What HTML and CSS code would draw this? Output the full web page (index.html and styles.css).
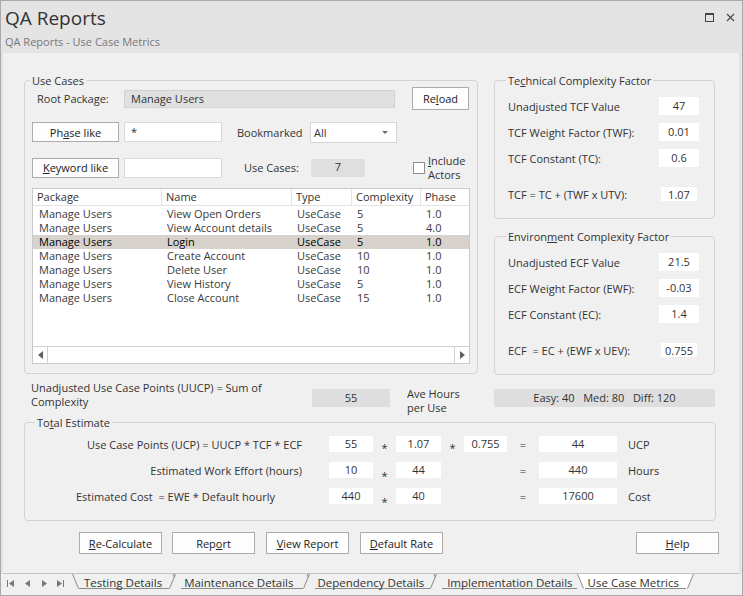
FILE: index.html
```html
<!DOCTYPE html>
<html>
<head>
<meta charset="utf-8">
<link rel="stylesheet" href="styles.css">
</head>
<body>
<div class="window">
  <header class="titlebar">
    <div class="titles">
      <h1 class="title">QA Reports</h1>
      <div class="subtitle">QA Reports - Use Case Metrics</div>
    </div>
    <div class="winbtns">
      <svg class="wicon" width="9" height="9" viewBox="0 0 9 9"><rect x="0.5" y="0.5" width="8" height="8" fill="none" stroke="#444" stroke-width="1"/><line x1="0" y1="1.5" x2="9" y2="1.5" stroke="#444"/></svg>
      <svg class="wicon" width="9" height="9" viewBox="0 0 9 9"><path d="M1 1 L8 8 M8 1 L1 8" stroke="#444" stroke-width="1.1" fill="none"/></svg>
    </div>
  </header>

  <main class="content">
    <div class="top">
      <fieldset class="group usecases">
        <legend>Use Cases</legend>
        <div class="uc-row r1">
          <span class="lbl root-lbl">Root Package:</span>
          <div class="rootbox">Manage Users</div>
          <button class="btn reload">Re<u>l</u>oad</button>
        </div>
        <div class="uc-row r2">
          <button class="btn wide">Ph<u>a</u>se like</button>
          <div class="input">*</div>
          <span class="lbl bm-lbl">Bookmarked</span>
          <div class="select"><span>All</span><svg width="6" height="3" viewBox="0 0 6 3"><path d="M0 0 L6 0 L3 3 Z" fill="#707070"/></svg></div>
        </div>
        <div class="uc-row r3">
          <button class="btn wide"><u>K</u>eyword like</button>
          <div class="input"></div>
          <span class="lbl uccount-lbl">Use Cases:</span>
          <div class="countbox">7</div>
          <span class="check"></span>
          <span class="check-lbl"><u>I</u>nclude<br>Actors</span>
        </div>
        <div class="grid">
          <div class="ghead">
            <div class="c c1">Package</div>
            <div class="c">Name</div>
            <div class="c">Type</div>
            <div class="c">Complexity</div>
            <div class="c last">Phase</div>
          </div>
          <div class="gbody">
            <div class="grow"><div class="c c1">Manage Users</div><div class="c">View Open Orders</div><div class="c">UseCase</div><div class="c">5</div><div class="c">1.0</div></div>
            <div class="grow"><div class="c c1">Manage Users</div><div class="c">View Account details</div><div class="c">UseCase</div><div class="c">5</div><div class="c">4.0</div></div>
            <div class="grow sel"><div class="c c1">Manage Users</div><div class="c">Login</div><div class="c">UseCase</div><div class="c">5</div><div class="c">1.0</div></div>
            <div class="grow"><div class="c c1">Manage Users</div><div class="c">Create Account</div><div class="c">UseCase</div><div class="c">10</div><div class="c">1.0</div></div>
            <div class="grow"><div class="c c1">Manage Users</div><div class="c">Delete User</div><div class="c">UseCase</div><div class="c">10</div><div class="c">1.0</div></div>
            <div class="grow"><div class="c c1">Manage Users</div><div class="c">View History</div><div class="c">UseCase</div><div class="c">5</div><div class="c">1.0</div></div>
            <div class="grow"><div class="c c1">Manage Users</div><div class="c">Close Account</div><div class="c">UseCase</div><div class="c">15</div><div class="c">1.0</div></div>
          </div>
          <div class="hscroll">
            <div class="sarrow left"><svg width="5" height="8" viewBox="0 0 5 8"><path d="M5 0 L0 4 L5 8 Z" fill="#606060"/></svg></div>
            <div class="strack"></div>
            <div class="sarrow right"><svg width="5" height="8" viewBox="0 0 5 8"><path d="M0 0 L5 4 L0 8 Z" fill="#606060"/></svg></div>
          </div>
        </div>
      </fieldset>

      <div class="factors">
        <fieldset class="group factor">
          <legend>Te<u>c</u>hnical Complexity Factor</legend>
          <div class="frow first"><span class="flbl">Unadjusted TCF Value</span><span class="fval">47</span></div>
          <div class="frow"><span class="flbl">TCF Weight Factor (TWF):</span><span class="fval">0.01</span></div>
          <div class="frow"><span class="flbl">TCF Constant (TC):</span><span class="fval">0.6</span></div>
          <div class="frow result"><span class="flbl">TCF = TC + (TWF x UTV):</span><span class="fval">1.07</span></div>
        </fieldset>
        <fieldset class="group factor">
          <legend>Environ<u>m</u>ent Complexity Factor</legend>
          <div class="frow first"><span class="flbl">Unadjusted ECF Value</span><span class="fval">21.5</span></div>
          <div class="frow"><span class="flbl">ECF Weight Factor (EWF):</span><span class="fval">-0.03</span></div>
          <div class="frow"><span class="flbl">ECF Constant (EC):</span><span class="fval">1.4</span></div>
          <div class="frow result"><span class="flbl">ECF &nbsp;= EC + (EWF x UEV):</span><span class="fval">0.755</span></div>
        </fieldset>
      </div>
    </div>

    <div class="uucp">
      <span class="uucp-lbl">Unadjusted Use Case Points (UUCP) = Sum of Complexity</span>
      <div class="graybox uucp-val">55</div>
      <span class="ave-lbl">Ave Hours per Use</span>
      <div class="graybox ave-val">Easy: 40 &nbsp; Med: 80 &nbsp; Diff: 120</div>
    </div>

    <fieldset class="group total">
      <legend>To<u>t</u>al Estimate</legend>
      <div class="trow first">
        <span class="tlbl">Use Case Points (UCP) = UUCP * TCF * ECF</span>
        <span class="tbox b1">55</span>
        <span class="op star">*</span>
        <span class="tbox b2">1.07</span>
        <span class="op star">*</span>
        <span class="tbox b3">0.755</span>
        <span class="op eq">=</span>
        <span class="tbox res">44</span>
        <span class="unit">UCP</span>
      </div>
      <div class="trow">
        <span class="tlbl">Estimated Work Effort (hours)</span>
        <span class="tbox b1">10</span>
        <span class="op star low">*</span>
        <span class="tbox b2">44</span>
        <span class="op gap"></span>
        <span class="op eq">=</span>
        <span class="tbox res">440</span>
        <span class="unit">Hours</span>
      </div>
      <div class="trow">
        <span class="tlbl left">Estimated Cost &nbsp;= EWE * Default hourly</span>
        <span class="tbox b1">440</span>
        <span class="op star low">*</span>
        <span class="tbox b2">40</span>
        <span class="op gap"></span>
        <span class="op eq">=</span>
        <span class="tbox res">17600</span>
        <span class="unit">Cost</span>
      </div>
    </fieldset>

    <div class="buttons">
      <button class="btn act"><u>R</u>e-Calculate</button>
      <button class="btn act">Rep<u>o</u>rt</button>
      <button class="btn act"><u>V</u>iew Report</button>
      <button class="btn act"><u>D</u>efault Rate</button>
      <button class="btn act help"><u>H</u>elp</button>
    </div>
  </main>

  <footer class="tabbar">
    <div class="nav">
      <svg width="7" height="7" viewBox="0 0 7 7"><rect x="0" y="0" width="1" height="7" fill="#777"/><path d="M7 0 L2 3.5 L7 7 Z" fill="#777"/></svg>
      <svg width="5" height="7" viewBox="0 0 5 7"><path d="M5 0 L0 3.5 L5 7 Z" fill="#777"/></svg>
      <svg width="5" height="7" viewBox="0 0 5 7"><path d="M0 0 L5 3.5 L0 7 Z" fill="#777"/></svg>
      <svg width="7" height="7" viewBox="0 0 7 7"><path d="M0 0 L5 3.5 L0 7 Z" fill="#777"/><rect x="6" y="0" width="1" height="7" fill="#777"/></svg>
    </div>
    <div class="tabs">
      <svg class="slant" width="7" height="15" viewBox="0 0 7 15"><line x1="0.5" y1="0" x2="6.5" y2="14.5" stroke="#8a8a8a"/></svg>
      <span class="tab t1">Testing Details</span>
      <svg class="slant" width="12" height="15" viewBox="0 0 12 15"><path d="M0.5 14.5 L6.5 0 M4 0 L5.4 3.4" stroke="#8a8a8a" fill="none"/></svg>
      <span class="tab t2">Maintenance Details</span>
      <svg class="slant" width="12" height="15" viewBox="0 0 12 15"><path d="M0.5 14.5 L6.5 0 M4 0 L5.4 3.4" stroke="#8a8a8a" fill="none"/></svg>
      <span class="tab t3">Dependency Details</span>
      <svg class="slant" width="12" height="15" viewBox="0 0 12 15"><path d="M0.5 14.5 L6.5 0 M4 0 L5.4 3.4" stroke="#8a8a8a" fill="none"/></svg>
      <span class="tab t4">Implementation Details</span>
      <svg class="slant" width="8" height="15" viewBox="0 0 8 15"><path d="M0 0 L8 0 L8 15 L6 15 Z" fill="#fff"/><line x1="0.5" y1="0" x2="6.5" y2="14.5" stroke="#8a8a8a"/></svg>
      <span class="tab active">Use Case Metrics</span>
      <svg class="slant" width="8" height="15" viewBox="0 0 8 15"><path d="M0 0 L8 0 L1.5 15 L0 15 Z" fill="#fff"/><line x1="1.5" y1="14.5" x2="7.5" y2="0" stroke="#8a8a8a"/></svg>
    </div>
  </footer>
</div>
</body>
</html>
```

FILE: styles.css
```css
* { box-sizing: border-box; }

body {
  margin: 0;
  width: 743px;
  height: 596px;
  overflow: hidden;
  font-family: "Open Sans", "Noto Sans", sans-serif;
  font-size: 11px;
  color: #333;
  background: #e4e4e4;
}

.window {
  width: 743px;
  height: 596px;
  border: 1px solid #a9a9a9;
  background: #e4e4e4;
  display: flex;
  flex-direction: column;
}

/* ---------- title bar ---------- */
.titlebar {
  height: 52px;
  flex: none;
  display: flex;
  justify-content: space-between;
  align-items: flex-start;
  padding: 5px 7px 0 4px;
}
.title {
  margin: 0;
  font-size: 19px;
  font-weight: 400;
  line-height: 24px;
  color: #333;
}
.subtitle {
  margin-top: 4px;
  font-size: 11px;
  line-height: 15px;
  color: #777;
}
.winbtns {
  display: flex;
  gap: 12px;
  padding-top: 7px;
}
.wicon { display: block; }

/* ---------- content ---------- */
.content {
  flex: none;
  height: 521px;
  margin: 0 3px 0 2px;
  background: #f0f0f0;
  border-bottom: 1px solid #c4c4c4;
  padding: 20px 0 0 21px;
  display: flex;
  flex-direction: column;
}

.top {
  display: flex;
  align-items: flex-start;
  gap: 16px;
}

.group {
  margin: 0;
  border: 1px solid #d3d3d3;
  border-radius: 4px;
  min-width: 0;
}
.group legend {
  line-height: 15px;
  padding: 0 2px;
  margin-left: -2px;
  color: #333;
}

/* ---------- use cases ---------- */
.usecases {
  width: 454px;
  height: 301px;
  padding: 0 7px;
}
.uc-row {
  display: flex;
  align-items: center;
}
.r1 { margin-top: -1px; height: 23px; }
.r2 { margin-top: 11px; height: 22px; }
.r3 { margin-top: 14px; height: 21px; }

.lbl { color: #333; white-space: nowrap; }
.root-lbl { margin-left: 5px; width: 87px; }
.rootbox {
  width: 271px;
  height: 18px;
  background: #e0e0e0;
  border: 1px solid #d2d2d2;
  padding-left: 6px;
  line-height: 16px;
  color: #333;
}
.btn {
  font-family: inherit;
  font-size: 11px;
  color: #222;
  background: #fdfdfd;
  border: 1px solid #acacac;
  border-radius: 0;
  padding: 0;
  margin: 0;
}
.reload { margin-left: 17px; width: 57px; height: 23px; }
.wide { width: 87px; height: 20px; }
.input {
  margin-left: 5px;
  width: 98px;
  height: 20px;
  background: #fff;
  border: 1px solid #dadada;
  padding-left: 6px;
  line-height: 18px;
}
.bm-lbl { margin-left: 15px; width: 73px; }
.select {
  width: 87px;
  height: 21px;
  background: #fff;
  border: 1px solid #d6d6d6;
  display: flex;
  align-items: center;
  justify-content: space-between;
  padding: 0 8px 0 3px;
}
.uccount-lbl { margin-left: 22px; width: 67px; }
.countbox {
  width: 54px;
  height: 18px;
  background: #dfdfdf;
  text-align: center;
  line-height: 16px;
}
.check {
  margin-left: 48px;
  width: 12px;
  height: 12px;
  border: 1px solid #8f8f8f;
  background: #fff;
  flex: none;
}
.check-lbl {
  margin-left: 3px;
  line-height: 14px;
}

/* grid */
.grid {
  margin-top: 10px;
  width: 438px;
  height: 176px;
  border: 1px solid #c9c9c9;
  background: #fff;
  display: flex;
  flex-direction: column;
}
.ghead, .grow {
  display: grid;
  grid-template-columns: 129px 130px 60px 69px 1fr;
}
.ghead {
  height: 17px;
  border-bottom: 1px solid #e3e3e3;
  line-height: 16px;
  color: #333;
}
.ghead .c {
  border-right: 1px solid #e3e3e3;
  padding-left: 4px;
}
.ghead .c.last { border-right: none; }
.gbody {
  flex: 1;
  padding-top: 1px;
}
.grow {
  height: 14px;
  line-height: 14px;
  color: #3a3a3a;
}
.grow .c { padding-left: 5px; white-space: nowrap; }
.grow .c.c1 { padding-left: 6px; }
.grow.sel { background: #d7d3cc; color: #000; }

.hscroll {
  height: 17px;
  border-top: 1px solid #d0d0d0;
  display: flex;
}
.sarrow {
  width: 15px;
  display: flex;
  align-items: center;
  justify-content: center;
}
.sarrow.left { border-right: 1px solid #d0d0d0; }
.sarrow.right { border-left: 1px solid #d0d0d0; }
.strack { flex: 1; }

/* ---------- factor groups ---------- */
.factors {
  display: flex;
  flex-direction: column;
  gap: 10px;
}
.factor {
  width: 221px;
  height: 146px;
  padding: 0 0 0 13px;
}
.frow {
  display: flex;
  align-items: center;
  height: 18px;
  margin-top: 8px;
}
.frow.first { margin-top: 9px; }
.flbl { width: 151px; white-space: nowrap; }
.fval {
  width: 40px;
  height: 18px;
  background: #fff;
  text-align: center;
  line-height: 18px;
}
.frow.result { margin-top: 20px; height: 14px; }
.frow.result .fval {
  margin-left: 2px;
  width: 36px;
  height: 14px;
  line-height: 15px;
}

/* ---------- UUCP row ---------- */
.uucp {
  display: flex;
  align-items: flex-start;
  margin-top: 5px;
  height: 28px;
}
.uucp-lbl {
  margin-left: 7px;
  width: 245px;
  margin-right: 36px;
  line-height: 14px;
  padding-top: 1px;
}
.graybox {
  margin-top: 9px;
  height: 18px;
  background: #dedede;
  text-align: center;
  line-height: 18px;
  white-space: pre;
}
.uucp-val { width: 78px; }
.ave-lbl {
  margin-top: 7px;
  margin-left: 17px;
  width: 60px;
  margin-right: 27px;
  line-height: 14px;
}
.ave-val { width: 221px; }

/* ---------- total estimate ---------- */
.total {
  margin-top: 7px;
  width: 692px;
  height: 106px;
  padding: 0;
}
.total legend { margin-left: 10px; }
.trow {
  display: flex;
  align-items: center;
  height: 16px;
  margin-top: 10px;
}
.trow.first { margin-top: 6px; }
.tlbl {
  width: 277px;
  text-align: right;
  white-space: nowrap;
  margin-right: 27px;
}
.tlbl.left { text-align: left; padding-left: 51px; }
.tbox {
  height: 16px;
  background: #fff;
  text-align: center;
  line-height: 16px;
}
.b1 { width: 44px; }
.b2 { width: 45px; }
.b3 { width: 43px; }
.res { width: 78px; }
.op { text-align: center; }
.star { width: 23px; padding-top: 7px; line-height: 14px; }
.star.low { padding-top: 12px; }
.gap { width: 66px; }
.eq { width: 32px; }
.unit { margin-left: 11px; }

/* ---------- buttons ---------- */
.buttons {
  display: flex;
  margin-top: 11px;
  padding-left: 55px;
}
.act {
  width: 83px;
  height: 22px;
  margin-right: 10px;
}
.act:nth-child(2), .act:nth-child(3) { margin-right: 11px; }
.act.help { margin-left: auto; margin-right: 20px; }

/* ---------- tab bar ---------- */
.tabbar {
  flex: 1;
  background: #f0f0f0;
  display: flex;
  align-items: flex-start;
  padding-left: 6px;
}
.nav {
  display: flex;
  align-items: center;
  height: 17px;
  padding-top: 1px;
}
.nav svg { display: block; }
.nav svg:nth-child(1) { margin-right: 11px; }
.nav svg:nth-child(2) { margin-right: 12px; }
.nav svg:nth-child(3) { margin-right: 10px; }
.tabs {
  display: flex;
  align-items: flex-start;
  margin-left: 8px;
}
.slant { display: block; flex: none; }
.tab {
  height: 15px;
  line-height: 17px;
  font-size: 11.5px;
  border-bottom: 1px solid #8a8a8a;
  color: #333;
  white-space: nowrap;
}
.t1 { padding: 0 7px 0 5px; }
.t2 { padding: 0 10px 0 3px; }
.t3 { padding: 0 6px 0 2px; }
.t4 { padding: 0 4px 0 5px; }
.tab.active { background: #fff; padding: 0 7px 0 3px; }
```
